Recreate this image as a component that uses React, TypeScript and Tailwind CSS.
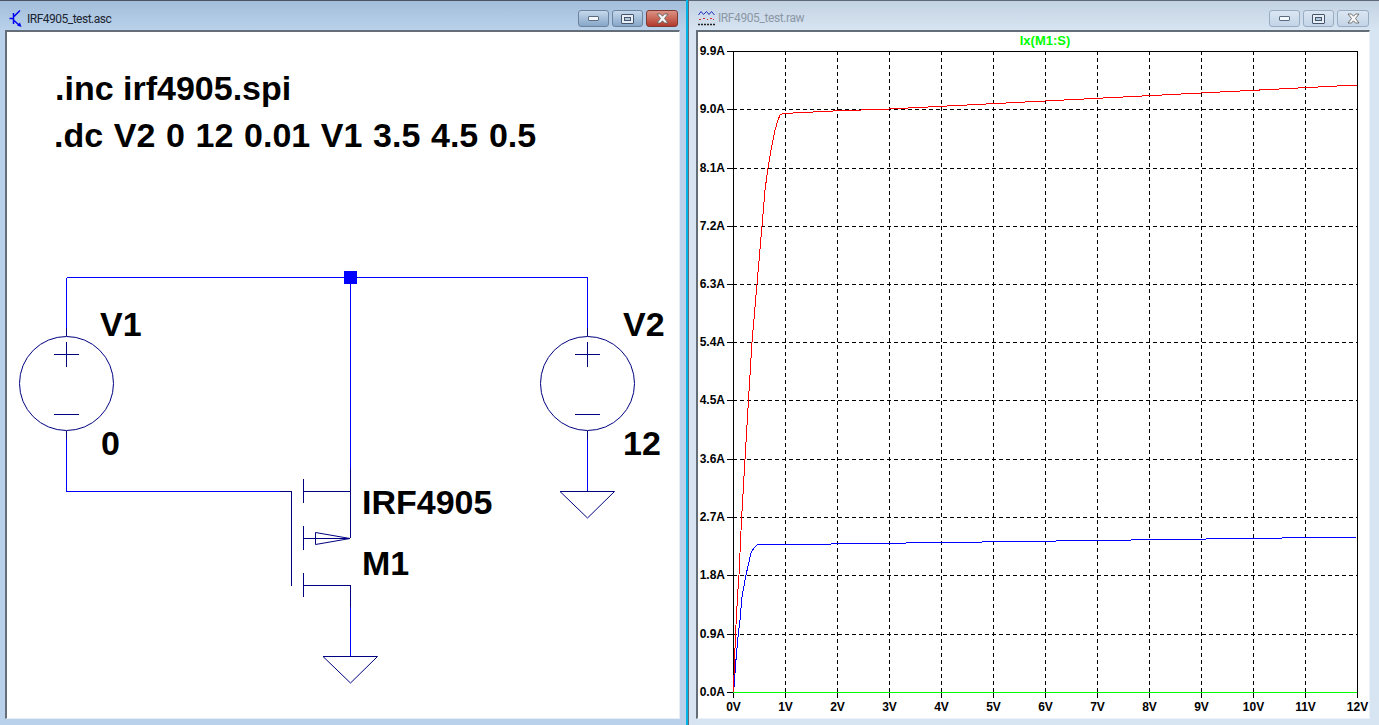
import React from "react";

const SANS = "font-['Liberation_Sans',Arial,sans-serif]";
const WIRE = "#0000ff";
const SYM = "#000080";

function MinGlyph() {
  return <span className="block h-[5px] w-[11px] rounded-[1px] border border-[#5a6b80] bg-[#f4f7fb]" />;
}
function MaxGlyph() {
  return (
    <span className="flex h-[10px] w-[13px] items-center justify-center rounded-[1px] border border-[#45566c] bg-[#e8eef6]">
      <span className="block h-[4px] w-[7px] border border-[#45566c] bg-[#b4c6da]" />
    </span>
  );
}
function CloseGlyph() {
  return (
    <svg width="15" height="11" viewBox="0 0 15 11">
      <path d="M2 1 H5.5 L7.5 3.2 L9.5 1 H13 L9.5 5.5 L13 10 H9.5 L7.5 7.8 L5.5 10 H2 L5.5 5.5 Z" fill="#f6f6f6" stroke="#5c5c5c" strokeWidth="0.8" />
    </svg>
  );
}

function Buttons({ active }: { active: boolean }) {
  const base = "flex h-[17px] items-center justify-center rounded-[3px] border";
  const normal = active
    ? "border-[#6c84a0] bg-linear-to-b from-[#c6d8eb] to-[#86a6c8]"
    : "border-[#98adc4] bg-linear-to-b from-[#dbe6f2] to-[#c3d4e6]";
  const close = active
    ? "border-[#7d3a34] bg-linear-to-b from-[#dc9184] to-[#b2372c]"
    : normal;
  return (
    <div className="flex items-start gap-[3px]">
      <div className={`${base} w-[31px] ${normal}`}><MinGlyph /></div>
      <div className={`${base} w-[31px] ${normal}`}><MaxGlyph /></div>
      <div className={`${base} w-[32px] ${close}`}><CloseGlyph /></div>
    </div>
  );
}

function TransistorIcon() {
  return (
    <svg width="13" height="17" viewBox="0 0 13 17" fill="none">
      <path d="M4.5 3 V14 M0.5 8.5 H4.5 M5 6.5 L11 0.5 M5 10.5 L10 15" stroke="#0000f0" strokeWidth="1.5" />
      <path d="M8 15.5 L12.5 17 L11 12.5 Z" fill="#0000f0" />
    </svg>
  );
}

function WaveIcon() {
  return (
    <svg width="17" height="16" viewBox="0 0 17 16" fill="none">
      <path d="M0.5 5 L3 1.5 L5.5 4.5 L8.5 1.5 L11 4.5 L13.5 1.5 L16.5 5" stroke="#2030c0" strokeWidth="1" />
      <path d="M1 9.5 h2 M5 8.5 h2 M9 9.5 h1 M12 8.5 h2 M15 9.5 h1" stroke="#d03030" strokeWidth="1" />
      <path d="M0 14.5 H17" stroke="#222" strokeWidth="1.5" strokeDasharray="2 1" />
    </svg>
  );
}

function Line({ d, c = SYM }: { d: string; c?: string }) {
  return <path d={d} stroke={c} strokeWidth="1" fill="none" shapeRendering="crispEdges" />;
}

function Source({ x }: { x: number }) {
  return (
    <g>
      <Line d={`M${x + 0.5} 277.5 V328`} c={WIRE} />
      <Line d={`M${x + 0.5} 328 V336`} />
      <circle cx={x + 0.5} cy={383.5} r={47} stroke={SYM} strokeWidth="1" fill="none" />
      <Line d={`M${x - 12} 354.5 H${x + 13} M${x + 0.5} 342 V367 M${x - 12} 414.5 H${x + 13}`} />
      <Line d={`M${x + 0.5} 431 V439`} />
    </g>
  );
}

function Ground({ x, y }: { x: number; y: number }) {
  return <path d={`M${x - 27} ${y + 0.5} H${x + 27.5} L${x + 0.5} ${y + 27} Z`} stroke={SYM} strokeWidth="1" fill="none" />;
}

function Label({ x, y, wide, children }: { x: number; y: number; wide?: boolean; children: React.ReactNode }) {
  return (
    <text x={x} y={y} fill="#000" className={`${SANS} text-[34px] font-bold ${wide ? "[word-spacing:1.2px]" : ""}`}>
      {children}
    </text>
  );
}

function Schematic() {
  return (
    <svg viewBox="7 32 672 686" width="672" height="686" className="block">
      <Label x={55} y={100}>.inc irf4905.spi</Label>
      <Label x={54} y={147} wide>.dc V2 0 12 0.01 V1 3.5 4.5 0.5</Label>
      <Label x={100} y={336}>V1</Label>
      <Label x={623} y={336}>V2</Label>
      <Label x={101} y={455}>0</Label>
      <Label x={623} y={455}>12</Label>
      <Label x={362} y={514}>IRF4905</Label>
      <Label x={362} y={575}>M1</Label>

      <Line d="M66.5 277.5 H587.5" c={WIRE} />
      <Source x={66} />
      <Source x={587} />
      <Line d="M66.5 439 V491.5 H280" c={WIRE} />
      <Line d="M587.5 439 V491" c={WIRE} />
      <Ground x={587} y={491} />

      <Line d="M350.5 277 V469" c={WIRE} />
      <rect x="344" y="271" width="13" height="13" fill={WIRE} />

      <Line d="M280 491.5 H291.5 V585.5" />
      <Line d="M303.5 479 V503 M303.5 491.5 H350.5 M350.5 469 V538" />
      <Line d="M303.5 526 V550 M303.5 538.5 H315.5" />
      <path d="M315.5 532.5 V544.5 L350 538.5 Z M315.5 538.5 H350" stroke={SYM} strokeWidth="1" fill="none" />
      <Line d="M303.5 573 V597 M303.5 585.5 H350.5 V607" />
      <Line d="M350.5 607 V656" c={WIRE} />
      <Ground x={350} y={656} />
    </svg>
  );
}

const yTicks = [
  ["9.9A", 51], ["9.0A", 109], ["8.1A", 168], ["7.2A", 226], ["6.3A", 284], ["5.4A", 342],
  ["4.5A", 400], ["3.6A", 459], ["2.7A", 517], ["1.8A", 575], ["0.9A", 634], ["0.0A", 692],
] as const;
const xTicks = Array.from({ length: 13 }, (_, i) => i);

const RED = "733,692 733.5,687 734.5,663 735.5,634 737.5,597 739,575 741.5,520 745,459 748.5,400 752,342 757,284 762,226 765,190 768,168 771,150 775,130 778,120 780,115 783,113.5 833,111 889,109 1357,85";
const BLUE = "733,692 734,687 735.7,663 738.3,634 740,620 742,597 746,575 751,553 754,548 757,545 1357,537";

function Plot() {
  const label = `${SANS} text-[12px] font-bold`;
  return (
    <svg viewBox="698 32 671 686" width="671" height="686" className="block">
      <text x={1045} y={45} textAnchor="middle" fill="#00ff00" className={`${SANS} text-[13px] font-bold`}>Ix(M1:S)</text>
      {yTicks.map(([t, y]) => (
        <g key={t}>
          <text x={725} y={y + 4} textAnchor="end" fill="#000" className={label}>{t}</text>
          <Line d={`M727 ${y + 0.5} H733`} c="#000" />
          {y !== 51 && y !== 692 && (
            <path d={`M733 ${y + 0.5} H1357`} stroke="#000" strokeWidth="1" strokeDasharray="4 3" shapeRendering="crispEdges" />
          )}
        </g>
      ))}
      {xTicks.map((i) => {
        const x = 733 + 52 * i;
        return (
          <g key={i}>
            <text x={x + 0.5} y={711} textAnchor="middle" fill="#000" className={label}>{`${i}V`}</text>
            <Line d={`M${x + 0.5} 692 V698`} c="#000" />
            {i > 0 && i < 12 && (
              <path d={`M${x + 0.5} 51 V692`} stroke="#000" strokeWidth="1" strokeDasharray="4 3" shapeRendering="crispEdges" />
            )}
          </g>
        );
      })}
      <path d="M733.5 51.5 H1357.5 V692.5 H733.5 Z" stroke="#000" strokeWidth="1" fill="none" shapeRendering="crispEdges" />
      <path d="M733 692.5 H1357" stroke="#00ff00" strokeWidth="1" shapeRendering="crispEdges" />
      <polyline points={BLUE} stroke="#0000ff" strokeWidth="1" fill="none" shapeRendering="crispEdges" />
      <polyline points={RED} stroke="#ff0000" strokeWidth="1" fill="none" shapeRendering="crispEdges" />
    </svg>
  );
}

export default function App() {
  return (
    <div className={`flex h-[725px] w-[1379px] overflow-hidden bg-white ${SANS}`}>
      <div className="flex h-full w-[686px] flex-col bg-[#b9d1ea] border-t border-[#4a5666]">
        <div className="flex h-[29px] shrink-0 items-start justify-between bg-linear-to-b from-[#a3bedb] to-[#b9d1ea] pl-[9px] pr-[8px] pt-[9px]">
          <div className="flex items-center gap-[5px]">
            <TransistorIcon />
            <span className="font-['Roboto',sans-serif] text-[12px] leading-[16px] tracking-[-0.5px] text-[#1c2530]">IRF4905_test.asc</span>
          </div>
          <Buttons active />
        </div>
        <div className="mb-[6px] ml-[5px] mr-[6px] flex-1 border-l-2 border-t-2 border-[#646e78] border-r border-b border-r-[#e6edf5] border-b-[#e6edf5] bg-white">
          <Schematic />
        </div>
      </div>
      <div className="h-full w-[2px] bg-[#00b4e6]" />
      <div className="flex h-full w-[691px] flex-col bg-[#d7e4f2] border-l border-t border-[#5f6a76]">
        <div className="flex h-[29px] shrink-0 items-start justify-between bg-linear-to-b from-[#c3d2e2] to-[#d7e4f2] pl-[9px] pr-[10px] pt-[9px]">
          <div className="flex items-center gap-[3px]">
            <WaveIcon />
            <span className="font-['Roboto',sans-serif] text-[12px] leading-[16px] tracking-[-0.4px] text-[#8c98a6]">IRF4905_test.raw</span>
          </div>
          <Buttons active={false} />
        </div>
        <div className="mb-[6px] ml-[7px] mr-[9px] flex-1 border-l-2 border-t-2 border-[#646e78] border-r border-b border-r-[#edf2f8] border-b-[#edf2f8] bg-white">
          <Plot />
        </div>
      </div>
    </div>
  );
}
